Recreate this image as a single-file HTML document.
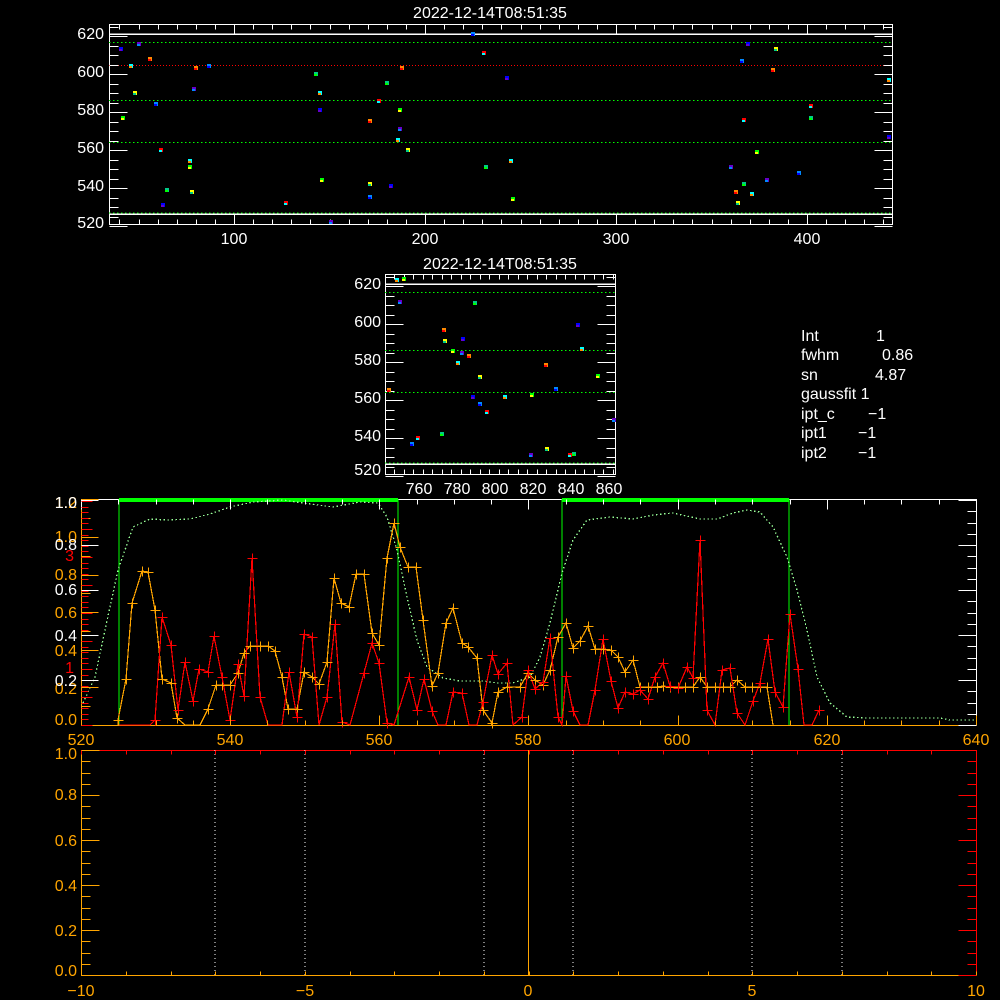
<!DOCTYPE html>
<html><head><meta charset="utf-8"><style>
html,body{margin:0;padding:0;background:#000;width:1000px;height:1000px;overflow:hidden}
svg{display:block}
line,rect,polyline{shape-rendering:crispEdges}
text{font-family:"Liberation Sans","DejaVu Sans",sans-serif;font-size:16px}
</style></head><body>
<svg id="s" width="1000" height="1000" xmlns="http://www.w3.org/2000/svg">
<rect width="1000" height="1000" fill="#000"/>
<text x="490" y="18" fill="#fff" text-anchor="middle" font-size="17">2022-12-14T08:51:35</text>
<rect x="109.5" y="24.5" width="783" height="200" fill="none" stroke="#fff"/>
<line x1="109" y1="34" x2="892" y2="34" stroke="#fff" stroke-width="1.5"/>
<line x1="109" y1="214" x2="892" y2="214" stroke="#fff" stroke-width="1.5"/>
<g stroke="#0f0" stroke-dasharray="1.5,2.5" stroke-width="1.2">
<line x1="109" y1="42.5" x2="892" y2="42.5"/><line x1="109" y1="100.5" x2="892" y2="100.5"/><line x1="109" y1="142.5" x2="892" y2="142.5"/><line x1="109" y1="213" x2="892" y2="213"/></g>
<line x1="109" y1="65.5" x2="892" y2="65.5" stroke="#f00" stroke-dasharray="1,2"/>
<g fill="#fff" text-anchor="end"><text x="104" y="39">620</text><text x="104" y="77">600</text><text x="104" y="115">580</text><text x="104" y="153">560</text><text x="104" y="191">540</text><text x="104" y="228">520</text></g>
<g fill="#fff" text-anchor="middle"><text x="234" y="244">100</text><text x="425" y="244">200</text><text x="616" y="244">300</text><text x="807" y="244">400</text></g>
<text x="500" y="269" fill="#fff" text-anchor="middle" font-size="17">2022-12-14T08:51:35</text>
<rect x="385.5" y="274.5" width="230" height="200" fill="none" stroke="#fff"/>
<line x1="385" y1="284" x2="615" y2="284" stroke="#fff" stroke-width="1.5"/>
<line x1="385" y1="464" x2="615" y2="464" stroke="#fff" stroke-width="1.5"/>
<g stroke="#0f0" stroke-dasharray="1.5,2.5" stroke-width="1.2">
<line x1="385" y1="292.5" x2="615" y2="292.5"/><line x1="385" y1="350.5" x2="615" y2="350.5"/><line x1="385" y1="392.5" x2="615" y2="392.5"/><line x1="385" y1="463" x2="615" y2="463"/></g>
<g fill="#fff" text-anchor="end"><text x="381" y="289">620</text><text x="381" y="327">600</text><text x="381" y="365">580</text><text x="381" y="403">560</text><text x="381" y="441">540</text><text x="381" y="475">520</text></g>
<g fill="#fff" text-anchor="middle"><text x="419" y="494">760</text><text x="457" y="494">780</text><text x="495" y="494">800</text><text x="533" y="494">820</text><text x="571" y="494">840</text><text x="609" y="494">860</text></g>
<g fill="#fff" font-size="20"><text x="801" y="341">Int</text><text x="876" y="341">1</text>
<text x="801" y="360">fwhm</text><text x="882" y="360">0.86</text>
<text x="801" y="380">sn</text><text x="875" y="380">4.87</text>
<text x="801" y="399">gaussfit 1</text>
<text x="801" y="419">ipt_c</text><text x="868" y="419">−1</text>
<text x="801" y="438">ipt1</text><text x="858" y="438">−1</text>
<text x="801" y="458">ipt2</text><text x="858" y="458">−1</text></g>
<line x1="81" y1="499.5" x2="976" y2="499.5" stroke="#fff"/>
<line x1="976.5" y1="499" x2="976.5" y2="725" stroke="#fff"/>
<line x1="81" y1="725.5" x2="976" y2="725.5" stroke="#ffa500"/>
<line x1="81.5" y1="499" x2="81.5" y2="725" stroke="#ffa500"/>
<g stroke="#0f0"><line x1="119" y1="499" x2="119" y2="725"/><line x1="398" y1="499" x2="398" y2="725"/><line x1="562" y1="499" x2="562" y2="725"/><line x1="789" y1="499" x2="789" y2="725"/></g>
<g stroke="#0f0" stroke-width="4"><line x1="119" y1="500" x2="398" y2="500"/><line x1="562" y1="500" x2="789" y2="500"/></g>
<polyline fill="none" stroke="#9f9" stroke-width="1.3" stroke-dasharray="1.5,2.5" points="83,703 95,677 105,630 118,570 133,527 150,519 167,520 190,519 210,514 230,507 253,502 283,500 303,503 333,507 360,502 378,503 387,517 397,550 407,597 417,640 427,667 443,678 460,681 483,681 498,683 513,683 530,677 540,657 550,623 562,573 573,540 587,520 610,517 633,519 653,515 673,513 700,519 717,519 733,513 747,510 760,512 773,527 787,557 797,590 807,630 817,677 830,703 847,717 867,718 940,718 950,720 976,720"/>
<polyline id="or" fill="none" stroke="#ffa500" stroke-width="1.2" points="118,725 118,720 126,679 132,603 142,571 148,572 155,610 162,679 171,683 177,718 185,725 200,725 208,709 216,685 222,685 230,685 238,673 244,653 250,646 260,646 268,646 275,651 282,677 288,709 297,709 304,672 312,677 319,684 327,662 334,578 341,603 349,607 356,574 364,574 372,633 379,645 387,558 394,523 400,547 408,567 416,567 423,620 432,686 438,673 446,623 453,608 462,643 468,647 477,658 483,710 492,723 498,692 507,687 520,687 528,673 535,680 543,685 550,670 558,637 566,623 573,648 580,641 588,626 595,649 603,649 611,650 618,657 625,672 633,660 640,687 648,687 657,687 663,686 670,687 678,687 685,687 693,687 700,677 707,687 715,687 723,687 730,687 737,680 745,687 752,687 760,687 767,687 773,725"/>
<polyline id="rd" fill="none" stroke="#f00" stroke-width="1.2" points="118,725 150,725 155,720 162,617 171,645 178,710 185,662 193,701 199,669 208,672 214,636 222,677 230,720 238,664 244,696 252,558 260,697 268,725 282,725 289,672 297,717 304,634 312,637 319,725 327,697 335,624 342,722 350,725 364,673 372,643 379,663 387,723 394,725 409,677 417,710 424,679 432,711 438,725 446,725 453,692 462,693 469,725 477,725 483,702 492,655 498,674 507,663 513,725 522,717 528,670 535,689 543,682 550,638 558,717 562,725 566,676 573,711 580,725 588,725 595,690 603,639 611,681 618,708 625,692 633,694 640,690 648,699 655,677 663,663 670,686 678,688 687,667 693,678 700,540 707,710 715,725 722,670 730,668 737,713 745,725 753,701 760,683 768,639 775,692 783,707 790,614 798,669 804,725 812,725 819,710"/>
<g id="marks"></g>
<g fill="#ffa500" text-anchor="middle"><text x="81" y="745">520</text><text x="230" y="745">540</text><text x="379" y="745">560</text><text x="528" y="745">580</text><text x="677" y="745">600</text><text x="827" y="745">620</text><text x="976" y="745">640</text></g>
<g fill="#ffa500" text-anchor="end"><text x="77" y="725">0.0</text><text x="77" y="694">0.2</text><text x="77" y="656">0.4</text><text x="77" y="618">0.6</text><text x="77" y="580">0.8</text><text x="77" y="542">1.0</text><text x="77" y="508">1.2</text></g>
<g fill="#fff" text-anchor="end"><text x="77" y="686">0.2</text><text x="77" y="641">0.4</text><text x="77" y="595">0.6</text><text x="77" y="550">0.8</text><text x="77" y="508">1.0</text></g>
<g fill="#f00" text-anchor="end"><text x="74" y="673">1</text><text x="74" y="561">3</text></g>
<line x1="81" y1="750.5" x2="976" y2="750.5" stroke="#f00"/>
<line x1="81" y1="750.5" x2="99" y2="750.5" stroke="#ffa500"/>
<line x1="976.5" y1="750" x2="976.5" y2="975" stroke="#f00"/>
<line x1="81" y1="975.5" x2="976" y2="975.5" stroke="#ffa500"/>
<line x1="81.5" y1="750" x2="81.5" y2="975" stroke="#ffa500"/>
<g stroke="#fff" stroke-dasharray="1.2,2.8"><line x1="215" y1="750" x2="215" y2="975"/><line x1="305" y1="750" x2="305" y2="975"/><line x1="484" y1="750" x2="484" y2="975"/><line x1="573" y1="750" x2="573" y2="975"/><line x1="752" y1="750" x2="752" y2="975"/><line x1="842" y1="750" x2="842" y2="975"/></g>
<line x1="528.5" y1="750" x2="528.5" y2="975" stroke="#ffa500"/>
<g fill="#ffa500" text-anchor="end"><text x="77" y="976">0.0</text><text x="77" y="936">0.2</text><text x="77" y="891">0.4</text><text x="77" y="846">0.6</text><text x="77" y="800">0.8</text><text x="77" y="759">1.0</text></g>
<g fill="#ffa500" text-anchor="middle"><text x="81" y="996">−10</text><text x="305" y="996">−5</text><text x="528" y="996">0</text><text x="752" y="996">5</text><text x="976" y="996">10</text></g>
<g id="ticks"></g>
<g id="dots"></g>
</svg>
<script>
(function(){
var NS="http://www.w3.org/2000/svg";
function R(v){return Math.round(v)+0.5;}
function L(g,x1,y1,x2,y2,c,w){var e=document.createElementNS(NS,"line");e.setAttribute("x1",R(x1));e.setAttribute("y1",R(y1));e.setAttribute("x2",R(x2));e.setAttribute("y2",R(y2));e.setAttribute("stroke",c);e.setAttribute("stroke-width",w||1);g.appendChild(e);}
var T=document.getElementById("ticks"),M=document.getElementById("marks"),D=document.getElementById("dots");
for(var v=40;v<=440;v+=10){var x=234+(v-100)*1.91;if(x<109||x>892)continue;var l=(v%100==0)?10:5;L(T,x,224,x,224-l,"#fff");L(T,x,24,x,24+l,"#fff");}
for(var v=520;v<=625;v+=5){var y=224-(v-520)*1.9+2;if(y<24)continue;var l=(v%20==0)?18:9;L(T,109,y,109+l,y,"#fff");L(T,892,y,892-l,y,"#fff");}
for(var v=742;v<=866;v+=5){var x=419+(v-760)*1.9;if(x<385||x>615)continue;var l=(v%20==0)?10:5;L(T,x,474,x,474-l,"#fff");L(T,x,274,x,274+l,"#fff");}
for(var v=520;v<=625;v+=5){var y=474-(v-520)*1.9+2;if(y<274)continue;var l=(v%20==0)?18:9;L(T,385,y,385+l,y,"#fff");L(T,615,y,615-l,y,"#fff");}
for(var v=520;v<=640;v+=5){var x=81+(v-520)*7.458;var l=(v%20==0)?10:5;L(T,x,725,x,725-l,"#ffa500");L(T,x,499,x,499+l,"#fff");}
for(var i=0;i<=12;i++){var y=725-i*18.8;L(T,81,y,i%2==0?98:90,y,"#ffa500");}
for(var i=0;i<=40;i++){var y=725-i*5.6;L(T,81,y,i%5==0?92:88,y,"#f00");}
for(var i=0;i<=4;i++){var y=680-i*45;L(T,81,y,98,y,"#fff");}
for(var i=0;i<=20;i++){var y=725-i*11.25;L(T,976,y,i%4==0?958:967,y,"#fff");}
for(var i=0;i<=20;i++){var y=975-i*11.25;L(T,81,y,i%4==0?99:90,y,"#ffa500");L(T,976,y,i%4==0?958:967,y,"#f00");}
for(var v=-10;v<=10;v+=1){var x=81+(v+10)*44.75;L(T,x,975,x,971,"#ffa500");L(T,x,750,x,754,"#f00");}
function cross(pl,c){var p=document.getElementById(pl).getAttribute("points").trim().split(/\s+/);p.forEach(function(s){var a=s.split(",");var x=+a[0],y=+a[1];if(y>=724)return;L(M,x-5,y,x+5,y,c);L(M,x,y-5,x,y+5,c);});}
cross("or","#ffa500");cross("rd","#f00");
var cols=["#00f","#0ff","#0f0","#60c","#f80","#ff0","#08f","#f00","#0c8"];
var topD=[[41,612],[46,603],[42,576],[50,615],[56,607],[48,589],[59,583],[62,559],[65,538],[63,530],[77,553],[77,550],[79,591],[80,602],[78,537],[87,603],[127,531],[143,599],[145,580],[145,589],[146,543],[151,521],[171,574],[171,541],[171,534],[176,585],[180,594],[182,540],[186,564],[187,580],[187,570],[188,602],[191,559],[225,620],[231,610],[232,550],[243,597],[245,553],[246,533],[360,550],[363,537],[364,531],[366,606],[367,575],[367,541],[369,615],[371,536],[374,558],[379,543],[382,601],[384,612],[396,547],[402,582],[402,576],[443,566],[443,596]];
function dot(x,y,i){x=Math.round(x);y=Math.round(y);var r=document.createElementNS(NS,"rect");r.setAttribute("x",x-2);r.setAttribute("y",y-2);r.setAttribute("width",4);r.setAttribute("height",4);r.setAttribute("fill",cols[i%cols.length]);D.appendChild(r);var r2=document.createElementNS(NS,"rect");r2.setAttribute("x",x-2);r2.setAttribute("y",y);r2.setAttribute("width",3);r2.setAttribute("height",2);r2.setAttribute("fill",cols[(i+3)%cols.length]);D.appendChild(r2);}
topD.forEach(function(d,i){dot(234+(d[0]-100)*1.91,224-(d[1]-520)*1.9,i);});
var mid=[[397,280],[404,279],[400,302],[444,330],[445,341],[412,444],[418,438],[475,303],[463,339],[458,363],[453,351],[462,353],[469,356],[480,377],[480,404],[487,412],[442,434],[473,397],[505,397],[532,395],[531,455],[546,365],[547,449],[556,389],[570,455],[574,454],[578,325],[582,349],[598,376],[614,420],[389,390]];
mid.forEach(function(d,i){dot(d[0],d[1],i+1);});
})();
</script>
</body></html>
